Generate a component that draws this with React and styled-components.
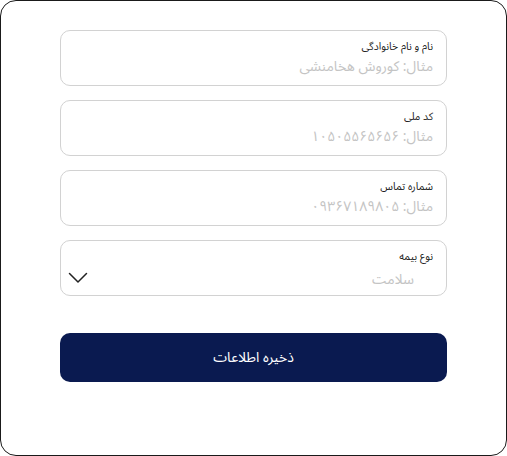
import React from 'react';
import styled, { createGlobalStyle } from 'styled-components';

const GlobalStyle = createGlobalStyle`
  html, body {
    margin: 0;
    padding: 0;
    background: #ffffff;
  }
  * {
    box-sizing: border-box;
  }
`;

const Frame = styled.div`
  width: 507px;
  height: 456px;
  border: 1px solid #1a1a1a;
  border-radius: 16px;
  background: #ffffff;
  direction: rtl;
  font-family: "Noto Sans Arabic", "DejaVu Sans", sans-serif;
  padding: 29px 59px 0 59px;
`;

const Form = styled.form`
  display: flex;
  flex-direction: column;
  gap: 14px;
`;

const Field = styled.label`
  display: flex;
  flex-direction: column;
  height: 56px;
  border: 1px solid #d2d2d2;
  border-radius: 10px;
  padding: 9px 13px 0 13px;
  position: relative;
`;

const Label = styled.span`
  font-size: 10.5px;
  color: #222222;
  line-height: 14px;
`;

const Input = styled.input`
  border: none;
  outline: none;
  background: transparent;
  direction: rtl;
  font-family: inherit;
  font-size: 14px;
  line-height: 20px;
  padding: 0;
  margin-top: 3px;
  color: #222;
  &::placeholder {
    color: #c4c4c4;
  }
`;

const SelectValue = styled.span`
  font-size: 14px;
  line-height: 20px;
  color: #c4c4c4;
  margin-top: 6px;
  padding-right: 19px;
`;

const Chevron = styled.svg`
  position: absolute;
  left: 7px;
  top: 31px;
`;

const SaveButton = styled.button`
  margin-top: 23px;
  height: 49px;
  border: none;
  border-radius: 10px;
  background: #0a1a50;
  color: #ffffff;
  font-family: inherit;
  font-size: 14px;
  cursor: pointer;
`;

const App = () => {
  return (
    <>
      <GlobalStyle />
      <Frame>
        <Form onSubmit={(e) => e.preventDefault()}>
          <Field>
            <Label>نام و نام خانوادگی</Label>
            <Input placeholder="مثال: کوروش هخامنشی" />
          </Field>
          <Field>
            <Label>کد ملی</Label>
            <Input placeholder="مثال: ۱۰۵۰۵۵۶۵۶۵۶" />
          </Field>
          <Field>
            <Label>شماره تماس</Label>
            <Input placeholder="مثال: ۰۹۳۶۷۱۸۹۸۰۵" />
          </Field>
          <Field as="div">
            <Label>نوع بیمه</Label>
            <SelectValue>سلامت</SelectValue>
            <Chevron width="20" height="12" viewBox="0 0 20 12" fill="none">
              <path d="M1.5 1.5 L10 10 L18.5 1.5" stroke="#222" strokeWidth="1.5" strokeLinecap="round" strokeLinejoin="round" />
            </Chevron>
          </Field>
          <SaveButton type="submit">ذخیره اطلاعات</SaveButton>
        </Form>
      </Frame>
    </>
  );
};

export default App;
